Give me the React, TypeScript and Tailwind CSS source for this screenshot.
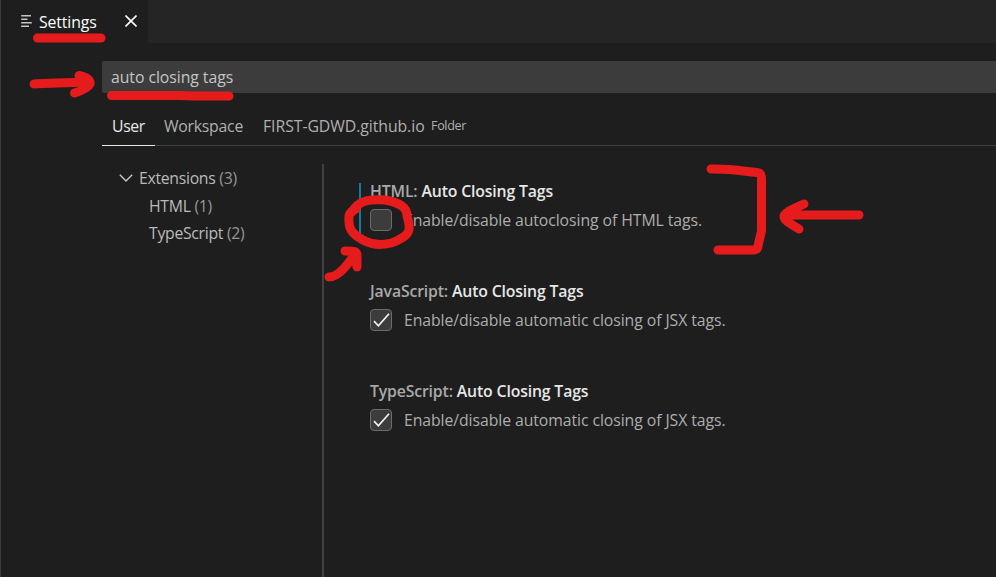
import type { ReactNode } from "react";

function TabBar() {
  return (
    <header className="flex h-[43px] bg-[#252526]">
      <div className="flex h-full w-[147px] shrink-0 items-center bg-[#1e1e1e] pl-5 text-white">
        <svg className="mt-[-1px] h-3 w-[11px] shrink-0" viewBox="0 0 11 12" fill="none" stroke="#c5c5c5" strokeWidth="1.4">
          <path d="M.2 .7H10M.2 4.2H6.5M.2 7.8H10.8M.2 11.3H8" />
        </svg>
        <span className="ml-[7px] w-[59px] pt-[1px] text-[15.8px] tracking-[-0.12px]">Settings</span>
        <svg className="mt-[-1px] ml-[27px] h-3 w-3 shrink-0" viewBox="0 0 12 12" fill="none" stroke="#fff" strokeWidth="1.6">
          <path d="M.5 .5L11.5 11.5M11.5 .5L.5 11.5" />
        </svg>
      </div>
    </header>
  );
}

function ScopeTabs() {
  return (
    <nav className="mt-[14px] flex h-[39px] border-b border-[#414141]">
      <span className="-mb-px flex w-[53px] items-center justify-center border-b border-[#e7e7e7] pb-[1px] tracking-[-0.4px] text-[#e7e7e7]">
        User
      </span>
      <span className="ml-[9px] w-[80px] pt-[8px] tracking-[-0.25px]">Workspace</span>
      <span className="ml-[19px] w-[163px] pt-[8px] tracking-[-0.06px]">FIRST-GDWD.github.io</span>
      <span className="ml-[5px] pt-[8px] text-[12.5px] tracking-[-0.3px]">Folder</span>
    </nav>
  );
}

function TocEntry({ name, count }: { name: string; count: number }) {
  return (
    <span className="tracking-[-0.3px] text-[#bababa]">
      {name} <span className="text-[#969696]">({count})</span>
    </span>
  );
}

function Toc() {
  return (
    <aside className="w-[220px] shrink-0 pt-[18px]">
      <div className="flex h-[28px] items-center pl-[17px]">
        <svg className="mr-[6px] h-2 w-[14px]" viewBox="0 0 14 8" fill="none" stroke="#c5c5c5" strokeWidth="1.4">
          <path d="M.8 .8L7 7L13.2 .8" />
        </svg>
        <TocEntry name="Extensions" count={3} />
      </div>
      <div className="flex h-[28px] items-center pl-[47px]">
        <TocEntry name="HTML" count={1} />
      </div>
      <div className="flex h-[26px] items-center pl-[47px]">
        <TocEntry name="TypeScript" count={2} />
      </div>
    </aside>
  );
}

function Setting({ category, checked, modified, children }: {
  category: string;
  checked: boolean;
  modified?: boolean;
  children: ReactNode;
}) {
  return (
    <section className="h-[100px]">
      <div className={`h-[53px] border-l-2 pl-[9px] ${modified ? "border-[#0c7d9d]" : "border-transparent"}`}>
        <h3 className="h-[26px] text-[15.8px] leading-[16px] font-semibold tracking-[-0.15px] text-[#a9a9a9]">
          {category}: <span className="text-[#e7e7e7]">Auto Closing Tags</span>
        </h3>
        <div className="flex h-[22px] items-center">
          <span className="flex size-[22px] shrink-0 items-center justify-center rounded-[4px] border border-[#6b6b6b] bg-[#3c3c3c]">
            {checked && (
              <svg className="h-[14px] w-[17px]" viewBox="0 0 17 14" fill="none" stroke="#f0f0f0" strokeWidth="1.7">
                <path d="M1 8.2L5.4 12.8L16 .7" />
              </svg>
            )}
          </span>
          <span className="ml-3 tracking-[-0.08px] text-[#adadad]">{children}</span>
        </div>
      </div>
    </section>
  );
}

function Annotations() {
  return (
    <svg
      className="pointer-events-none absolute top-0 -left-px h-[577px] w-[996px]"
      viewBox="0 0 996 577"
      fill="none"
      stroke="#e61c1c"
      strokeWidth="9"
      strokeLinecap="round"
      strokeLinejoin="round"
    >
      <path d="M37.500 38H101" />
      <path d="M111.500 95.500H180C194 96.200 210 96.200 229 96" />
      <path d="M34 84C50 82.500 66 83.500 88 81.500M79 75.500C88 77.500 91 81 90 84C88 88 82 90.500 74.500 93" />
      <path d="M711 169C731 168.500 742 171 757 172.500C761 173 761.500 175 761.500 180V231L757.500 248C757 250 754 250 748 250H718" />
      <path d="M859 215H789M804 204C793 209 784 213 784 216C784 221 791 224 799 229M789 211L789 219" />
      <path d="M352 212C358 201 368 199 385 200C400 203 407 207 407 216C411 229 410 234 400 239C389 246 374 246 363 240C352 234 348 229 349 216C350 211 354 210 356 209" />
      <path d="M329 277C339 277 348 264 355 254M345 251C354 251 357 251 357 256V267M352 256L354 262" />
    </svg>
  );
}

export default function App() {
  return (
    <main className="relative flex h-[577px] w-[996px] flex-col overflow-hidden border-l border-[#3b3b3b] bg-[#1e1e1e] font-['Open_Sans','Noto_Sans',sans-serif] text-[15.8px] leading-[22px] whitespace-nowrap text-[#b0b0b0]">
      <TabBar />
      <div className="flex min-h-0 flex-1 flex-col pt-[18px] pl-[101px]">
        <div className="flex h-8 shrink-0 items-center rounded-l-[2px] bg-[#3c3c3c] pl-[9px] tracking-[-0.06px] text-[#c5c5c5]">
          auto closing tags
        </div>
        <ScopeTabs />
        <div className="flex min-h-0 flex-1">
          <Toc />
          <div className="mt-[18px] flex-1 border-l-2 border-[#414141] pt-[19px] pl-[35px]">
            <Setting category="HTML" checked={false} modified>Enable/disable autoclosing of HTML tags.</Setting>
            <Setting category="JavaScript" checked>Enable/disable automatic closing of JSX tags.</Setting>
            <Setting category="TypeScript" checked>Enable/disable automatic closing of JSX tags.</Setting>
          </div>
        </div>
      </div>
      <Annotations />
    </main>
  );
}
